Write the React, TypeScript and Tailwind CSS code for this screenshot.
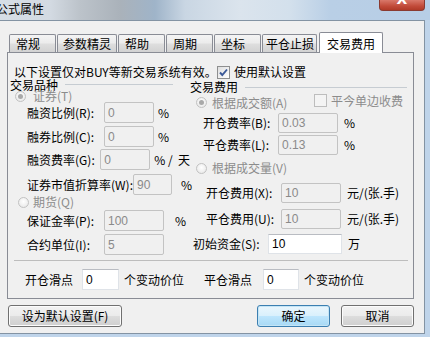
import React from "react";

const F = "font-['Noto_Sans_CJK_SC','Noto_Sans_CJK_JP',sans-serif]";

function Field({ v, cls, on }: { v: string; cls: string; on?: boolean }) {
  return (
    <div
      className={`${cls} shrink-0 flex items-center pl-[3px] text-[12px] font-['Liberation_Sans',sans-serif] ${
        on
          ? "bg-white border border-[#dfe3e8] border-t-[#b9bcc2] text-black"
          : "bg-[#f0f0f0] border border-[#c3c3c3] rounded-[2px] text-[#8a8a8a]"
      }`}
    >
      {v}
    </div>
  );
}

function Radio({ on, cls }: { on?: boolean; cls?: string }) {
  return (
    <div
      className={`${cls ?? ""} shrink-0 w-[11px] h-[11px] rounded-full border border-[#c2c2c2] bg-[radial-gradient(circle_at_50%_40%,#ffffff,#e4e4e4)] flex items-center justify-center`}
    >
      {on && <div className="w-[5px] h-[5px] rounded-full bg-[#a9a9a9]" />}
    </div>
  );
}

function Check({ on, dis }: { on?: boolean; dis?: boolean }) {
  return (
    <div
      className={`shrink-0 w-[13px] h-[13px] border ${
        dis ? "border-[#bdbdbd] bg-[#f4f4f4]" : "border-[#8e8f8f] bg-[linear-gradient(135deg,#dedede,#ffffff)]"
      } flex items-center justify-center`}
    >
      {on && (
        <svg width="11" height="11" viewBox="0 0 11 11">
          <path d="M2 5.5 L4.3 8 L9 2.5" fill="none" stroke="#3b5998" strokeWidth="1.9" />
        </svg>
      )}
    </div>
  );
}

function Tab({ cls, children }: { cls: string; children: React.ReactNode }) {
  return (
    <div
      className={`${cls} h-[18px] mb-[1px] border border-b-0 border-[#898c95] rounded-t-[2px] bg-[linear-gradient(#f4f4f4,#ececec_45%,#dedede_55%,#d2d2d2)] flex items-center pt-[1px] whitespace-nowrap overflow-hidden`}
    >
      {children}
    </div>
  );
}

function Btn({ cls, def, children }: { cls: string; def?: boolean; children: React.ReactNode }) {
  return (
    <div
      className={`${cls} h-[22px] rounded-[3px] border flex items-center justify-center whitespace-nowrap ${
        def
          ? "border-[#3c7fb1] bg-[linear-gradient(#eaf6fd,#d9f0fc_50%,#bee6fd_50%,#a7d9f5)] shadow-[inset_0_0_0_1px_#c4e5f6]"
          : "border-[#707070] bg-[linear-gradient(#f2f2f2,#ebebeb_50%,#dddddd_50%,#cfcfcf)] shadow-[inset_0_0_0_1px_#fcfcfc]"
      }`}
    >
      {children}
    </div>
  );
}

export default function App() {
  return (
    <div className={`w-[430px] h-[337px] overflow-hidden bg-[#bfd4ea] text-[12px] leading-none text-black ${F}`}>
      {/* title bar */}
      <div className="h-[20px] flex items-start bg-[linear-gradient(to_right,#d6dee6_0px,#d3dae2_50px,#bcc3ca_80px,#aab2ba_120px,#9fb4c9_155px,#c9d6e3_185px,#dbe4ed_240px,#d3e0ec_290px,#b9cfe6_330px,#b7cee6_430px)]">
        <span className="ml-[-4px] mt-[2px] text-[12px] leading-[14px]">公式属性</span>
        <div className="ml-auto mr-[5px] w-[46px] h-[11px] rounded-b-[4px] border border-t-0 border-[#8a3a30] bg-[linear-gradient(#d9786a,#c24b3a_60%,#b03a28)] flex justify-center overflow-hidden">
          <span className="text-white text-[14px] font-bold leading-none mt-[-8px] font-['DejaVu_Sans',sans-serif]">X</span>
        </div>
      </div>

      <div className="flex">
        <div className="w-[425px] h-[314px] border-t border-r border-b border-[#8393a3] bg-[#f0f0f0] flex flex-col">
          {/* tabs */}
          <div className="mt-[11px] h-[21px] flex items-end relative z-10">
            <Tab cls="ml-[9px] w-[47px] pl-[6px]">常规</Tab>
            <Tab cls="ml-[1px] w-[60px] pl-[5px]">参数精灵</Tab>
            <Tab cls="ml-[1px] w-[47px] pl-[6px]">帮助</Tab>
            <Tab cls="ml-[1px] w-[47px] pl-[6px]">周期</Tab>
            <Tab cls="ml-[1px] w-[47px] pl-[6px]">坐标</Tab>
            <Tab cls="ml-[1px] w-[55px] pl-[3px]">平仓止损</Tab>
            <div className="ml-[2px] w-[64px] h-[21px] bg-white border border-b-0 border-[#898c95] rounded-t-[2px] flex items-center pl-[7px] pt-[1px] whitespace-nowrap">
              交易费用
            </div>
          </div>

          {/* panel */}
          <div className="mt-[-1px] ml-[7px] w-[407px] h-[247px] border border-[#898c95] bg-[#f0f0f0] flex flex-col">
            <div className="mt-[13px] h-[12px] flex items-center">
              <span className="ml-[6px] w-[203px] whitespace-nowrap">以下设置仅对BUY等新交易系统有效。</span>
              <Check on />
              <span className="ml-[4px] whitespace-nowrap">使用默认设置</span>
            </div>

            <div className="flex">
              {/* left column */}
              <div className="w-[182px] flex flex-col">
                <div className="mt-[1px] h-[11px] flex items-center">
                  <span className="ml-[2px] w-[55px] whitespace-nowrap">交易品种</span>
                  <div className="w-[108px] h-px bg-[#c6ccd2]" />
                </div>
                <div className="h-[12px] flex items-center">
                  <Radio on cls="ml-[7px]" />
                  <span className="ml-[7px] text-[#8c8c8c] whitespace-nowrap">证券(T)</span>
                </div>
                <div className="h-[21px] flex items-center">
                  <span className="ml-[19px] w-[77px] whitespace-nowrap">融资比例(R):</span>
                  <Field v="0" cls="w-[50px] h-[21px]" />
                  <span className="ml-[4px]">%</span>
                </div>
                <div className="mt-[3px] h-[21px] flex items-center">
                  <span className="ml-[19px] w-[77px] whitespace-nowrap">融券比例(C):</span>
                  <Field v="0" cls="w-[50px] h-[21px]" />
                  <span className="ml-[4px]">%</span>
                </div>
                <div className="mt-[2px] h-[21px] flex items-center">
                  <span className="ml-[19px] w-[77px] whitespace-nowrap">融资费率(G):</span>
                  <Field v="0" cls="w-[50px] h-[21px]" />
                  <span className="ml-[4px] whitespace-pre">% /  天</span>
                </div>
                <div className="mt-[4px] h-[21px] flex items-center">
                  <span className="ml-[19px] w-[112px] whitespace-nowrap">证券市值折算率(W):</span>
                  <Field v="90" cls="w-[39px] h-[21px]" />
                  <span className="ml-[9px]">%</span>
                </div>
                <div className="mt-[1px] h-[12px] flex items-center">
                  <Radio cls="ml-[10px]" />
                  <span className="ml-[4px] text-[#8c8c8c] whitespace-nowrap">期货(Q)</span>
                </div>
                <div className="mt-[2px] h-[21px] flex items-center">
                  <span className="ml-[19px] w-[77px] whitespace-nowrap">保证金率(P):</span>
                  <Field v="100" cls="w-[60px] h-[21px]" />
                  <span className="ml-[11px]">%</span>
                </div>
                <div className="mt-[3px] h-[21px] flex items-center">
                  <span className="ml-[19px] w-[77px] whitespace-nowrap">合约单位(I):</span>
                  <Field v="5" cls="w-[60px] h-[21px]" />
                </div>
              </div>

              {/* right column */}
              <div className="flex-1 flex flex-col">
                <div className="mt-[3px] h-[12px] flex items-center">
                  <span className="w-[55px] whitespace-nowrap">交易费用</span>
                  <div className="w-[162px] h-px bg-[#c6ccd2]" />
                </div>
                <div className="mt-[1px] h-[15px] flex items-start">
                  <div className="ml-[6px] w-[118px] h-[13px] mt-[2px] flex items-center">
                    <Radio on />
                    <span className="ml-[5px] text-[#8c8c8c] whitespace-nowrap">根据成交额(A)</span>
                  </div>
                  <div className="h-[13px] flex items-center">
                    <Check dis />
                    <span className="ml-[4px] text-[#8c8c8c] whitespace-nowrap">平今单边收费</span>
                  </div>
                </div>
                <div className="mt-[4px] h-[20px] flex items-center">
                  <span className="ml-[13px] w-[75px] whitespace-nowrap">开仓费率(B):</span>
                  <Field v="0.03" cls="w-[60px] h-[20px]" />
                  <span className="ml-[6px]">%</span>
                </div>
                <div className="mt-[2px] h-[20px] flex items-center">
                  <span className="ml-[13px] w-[75px] whitespace-nowrap">平仓费率(L):</span>
                  <Field v="0.13" cls="w-[60px] h-[20px]" />
                  <span className="ml-[6px]">%</span>
                </div>
                <div className="mt-[7px] h-[12px] flex items-center">
                  <Radio cls="ml-[6px]" />
                  <span className="ml-[5px] text-[#8c8c8c] whitespace-nowrap">根据成交量(V)</span>
                </div>
                <div className="mt-[9px] h-[20px] flex items-center">
                  <span className="ml-[16px] w-[75px] whitespace-nowrap">开仓费用(X):</span>
                  <Field v="10" cls="w-[60px] h-[20px]" />
                  <span className="ml-[6px] whitespace-nowrap">元/(张.手)</span>
                </div>
                <div className="mt-[6px] h-[20px] flex items-center">
                  <span className="ml-[16px] w-[75px] whitespace-nowrap">平仓费用(U):</span>
                  <Field v="10" cls="w-[60px] h-[20px]" />
                  <span className="ml-[6px] whitespace-nowrap">元/(张.手)</span>
                </div>
                <div className="mt-[5px] h-[20px] flex items-center">
                  <span className="ml-[3px] w-[75px] whitespace-nowrap">初始资金(S):</span>
                  <Field on v="10" cls="w-[74px] h-[20px]" />
                  <span className="ml-[6px]">万</span>
                </div>
              </div>
            </div>

            <div className="mt-[5px] ml-[6px] w-[394px] h-px bg-[#bdbdbd]" />

            <div className="mt-[8px] h-[21px] flex items-center">
              <span className="ml-[17px] w-[57px] whitespace-nowrap">开仓滑点</span>
              <Field on v="0" cls="w-[37px] h-[21px]" />
              <span className="ml-[5px] w-[80px] whitespace-nowrap">个变动价位</span>
              <span className="w-[59px] whitespace-nowrap">平仓滑点</span>
              <Field on v="0" cls="w-[36px] h-[21px]" />
              <span className="ml-[5px] whitespace-nowrap">个变动价位</span>
            </div>
          </div>

          {/* buttons */}
          <div className="mt-[6px] flex">
            <Btn cls="ml-[8px] w-[114px]">设为默认设置(F)</Btn>
            <Btn def cls="ml-[135px] w-[73px]">确定</Btn>
            <Btn cls="ml-[11px] w-[73px]">取消</Btn>
          </div>
        </div>
      </div>
    </div>
  );
}
